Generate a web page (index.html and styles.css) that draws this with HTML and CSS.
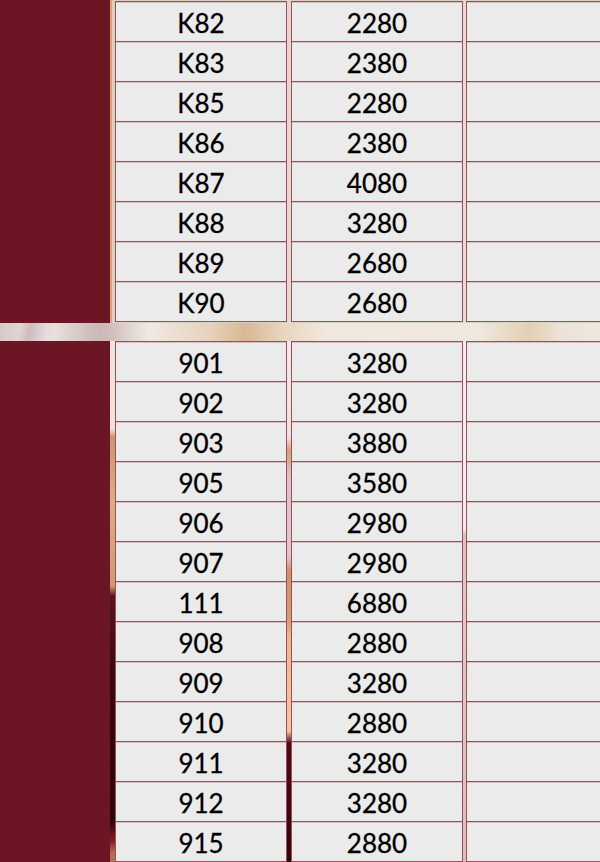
FILE: index.html
```html
<!DOCTYPE html>
<html lang="zh">
<head>
<meta charset="utf-8">
<title>价格表</title>
<link rel="stylesheet" href="styles.css">
</head>
<body>
<div class="page">
  <section class="block block-top">
    <div class="side"></div>
    <div class="col col-name">
      <div class="cell">K82</div>
      <div class="cell">K83</div>
      <div class="cell">K85</div>
      <div class="cell">K86</div>
      <div class="cell">K87</div>
      <div class="cell">K88</div>
      <div class="cell">K89</div>
      <div class="cell">K90</div>
    </div>
    <div class="col col-price">
      <div class="cell">2280</div>
      <div class="cell">2380</div>
      <div class="cell">2280</div>
      <div class="cell">2380</div>
      <div class="cell">4080</div>
      <div class="cell">3280</div>
      <div class="cell">2680</div>
      <div class="cell">2680</div>
    </div>
    <div class="col col-note">
      <div class="cell"></div>
      <div class="cell"></div>
      <div class="cell"></div>
      <div class="cell"></div>
      <div class="cell"></div>
      <div class="cell"></div>
      <div class="cell"></div>
      <div class="cell"></div>
    </div>
  </section>
  <div class="band"></div>
  <section class="block block-bottom">
    <div class="side"></div>
    <div class="col col-name">
      <div class="cell">901</div>
      <div class="cell">902</div>
      <div class="cell">903</div>
      <div class="cell">905</div>
      <div class="cell">906</div>
      <div class="cell">907</div>
      <div class="cell">111</div>
      <div class="cell">908</div>
      <div class="cell">909</div>
      <div class="cell">910</div>
      <div class="cell">911</div>
      <div class="cell">912</div>
      <div class="cell">915</div>
    </div>
    <div class="col col-price">
      <div class="cell">3280</div>
      <div class="cell">3280</div>
      <div class="cell">3880</div>
      <div class="cell">3580</div>
      <div class="cell">2980</div>
      <div class="cell">2980</div>
      <div class="cell">6880</div>
      <div class="cell">2880</div>
      <div class="cell">3280</div>
      <div class="cell">2880</div>
      <div class="cell">3280</div>
      <div class="cell">3280</div>
      <div class="cell">2880</div>
    </div>
    <div class="col col-note">
      <div class="cell"></div>
      <div class="cell"></div>
      <div class="cell"></div>
      <div class="cell"></div>
      <div class="cell"></div>
      <div class="cell"></div>
      <div class="cell"></div>
      <div class="cell"></div>
      <div class="cell"></div>
      <div class="cell"></div>
      <div class="cell"></div>
      <div class="cell"></div>
      <div class="cell"></div>
    </div>
  </section>
</div>
</body>
</html>
```

FILE: styles.css
```css
html, body {
  margin: 0;
  padding: 0;
  width: 600px;
  height: 862px;
  overflow: hidden;
  background: #e9ddd2;
}

.page {
  width: 600px;
  height: 862px;
  overflow: hidden;
  font-family: Lato, "Noto Sans", "Noto Sans CJK SC", sans-serif;
}

.block {
  display: flex;
  align-items: flex-start;
  width: 600px;
}

.block-top {
  height: 323px;
  background:
    linear-gradient(#e4d6cc, #e6d9d0) 287px 0 / 4px 100% no-repeat,
    linear-gradient(#e6dcd4, #e8ddd6) 463px 0 / 3px 100% no-repeat,
    #dccfc3;
}

.block-bottom {
  height: 521px;
  background:
    linear-gradient(#f0e6de 0, #efe2d8 88px, #c99670 96px, #dcae84 160px, #cf9a70 245px, #5a1420 255px, #3a0810 330px, #2a0508 480px, #8a1a22 500px, #b07058 512px) 110px 0 / 5px 100% no-repeat,
    linear-gradient(#f2ebe7 0, #efe4de 95px, #d4a078 110px, #d8c4c4 135px, #dccaca 215px, #cc9468 230px, #d49e74 280px, #e8b890 295px, #f0c8a0 390px, #4a0c14 402px, #3c0a10 460px, #2e060a 521px) 287px 0 / 4px 100% no-repeat,
    linear-gradient(#f4efec 0, #f3eeea 188px, #d8c2bc 194px, #dccac4 260px, #d6c0bc 521px) 463px 0 / 3px 100% no-repeat,
    #e4d6cc;
}

.side {
  flex: 0 0 auto;
  align-self: stretch;
  width: 110px;
  background: #6c1524;
}

.block-top .side {
  border-right: 2px solid #e0a474;
}

.block-bottom .side {
  margin-right: 2px;
}

.col {
  flex: 0 0 auto;
  box-sizing: border-box;
  border: 1px solid #a8485c;
  background: #ebebeb;
}

.block-top .col {
  margin-top: 1px;
}

.col-name {
  width: 172px;
  margin-left: 3px;
}

.col-price {
  width: 172px;
  margin-left: 4px;
}

.col-note {
  width: 150px;
  margin-left: 3px;
}

.cell {
  height: 39px;
  display: flex;
  align-items: center;
  justify-content: center;
  font-size: 26px;
  line-height: 1;
  color: #000000;
  -webkit-text-stroke: 0.3px #000000;
  padding-top: 2px;
  box-sizing: border-box;
  background: linear-gradient(#dcbcc2, #dcbcc2) 0 0 / 100% 1px no-repeat;
}

.cell + .cell {
  border-top: 1px solid #a8485c;
  height: 40px;
}

.band {
  height: 18px;
  width: 600px;
  background:
    linear-gradient(100deg, transparent 0, transparent 20px, rgba(190, 160, 165, 0.55) 30px, transparent 55px, transparent 80px, rgba(205, 185, 185, 0.6) 100px, transparent 125px),
    linear-gradient(90deg, #d6c8c8 0, #efe7e6 45px, #c9b7b5 100px, #f1e9e2 150px, #e6d2bc 210px, #d9b894 245px, #e9d6c2 285px, #f1e9df 330px, #efe8de 480px, #e3cfb4 530px, #ece2d6 560px, #efe8de 600px);
}
```
